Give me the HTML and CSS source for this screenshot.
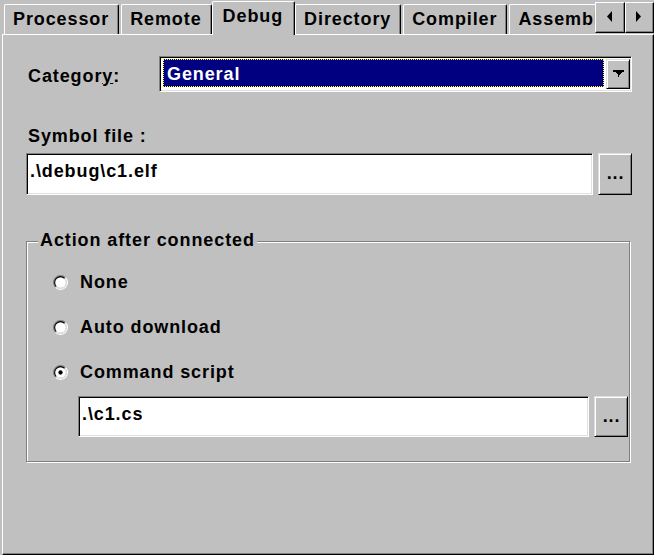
FILE: index.html
```html
<!DOCTYPE html>
<html>
<head>
<meta charset="utf-8">
<title>Debug settings</title>
<link rel="stylesheet" href="styles.css">
</head>
<body>
<div class="dialog">
  <div class="tabstrip">
    <div class="tabs">
      <div class="tab">Processor</div>
      <div class="tab">Remote</div>
      <div class="tab active">Debug</div>
      <div class="tab">Directory</div>
      <div class="tab">Compiler</div>
      <div class="tab">Assembler</div>
    </div>
    <div class="scroller">
      <div class="scroll-btn">
        <svg width="6" height="11" viewBox="0 0 6 11"><polygon points="5,0 5,11 0,5.5" fill="#000"/></svg>
      </div>
      <div class="scroll-btn">
        <svg width="6" height="11" viewBox="0 0 6 11"><polygon points="0,0 0,11 5,5.5" fill="#000"/></svg>
      </div>
    </div>
  </div>

  <div class="panel">
    <div class="category-row">
      <span class="label category-label">Categor<u>y</u>:</span>
      <div class="combo">
        <div class="combo-value">General</div>
        <div class="combo-btn">
          <svg width="11" height="7" viewBox="0 0 11 7" shape-rendering="crispEdges">
            <rect x="0" y="0" width="11" height="2" fill="#000"/>
            <polygon points="2,2 9,2 5.5,5.5" fill="#000"/>
            <rect x="5" y="5" width="1" height="2" fill="#000"/>
          </svg>
        </div>
      </div>
    </div>

    <div class="label symbol-label">Symbol file :</div>
    <div class="file-row">
      <div class="field symbol-field">.\debug\c1.elf</div>
      <div class="btn">...</div>
    </div>

    <fieldset class="group">
      <legend>Action after connected</legend>
      <div class="radios">
        <div class="radio">
          <svg width="15" height="15" viewBox="0 0 14 14">
            <circle cx="7" cy="7" r="5" fill="#fff"/>
            <path d="M2.4 11.6 A6.5 6.5 0 0 1 11.6 2.4" stroke="#808080" fill="none"/>
            <path d="M11.6 2.4 A6.5 6.5 0 0 1 2.4 11.6" stroke="#fff" fill="none"/>
            <path d="M3.11 10.89 A5.5 5.5 0 0 1 10.89 3.11" stroke="#000" fill="none"/>
            <path d="M10.89 3.11 A5.5 5.5 0 0 1 3.11 10.89" stroke="#dfdfdf" fill="none"/>
          </svg>
          <span>None</span>
        </div>
        <div class="radio">
          <svg width="15" height="15" viewBox="0 0 14 14">
            <circle cx="7" cy="7" r="5" fill="#fff"/>
            <path d="M2.4 11.6 A6.5 6.5 0 0 1 11.6 2.4" stroke="#808080" fill="none"/>
            <path d="M11.6 2.4 A6.5 6.5 0 0 1 2.4 11.6" stroke="#fff" fill="none"/>
            <path d="M3.11 10.89 A5.5 5.5 0 0 1 10.89 3.11" stroke="#000" fill="none"/>
            <path d="M10.89 3.11 A5.5 5.5 0 0 1 3.11 10.89" stroke="#dfdfdf" fill="none"/>
          </svg>
          <span>Auto download</span>
        </div>
        <div class="radio">
          <svg width="15" height="15" viewBox="0 0 14 14">
            <circle cx="7" cy="7" r="5" fill="#fff"/>
            <path d="M2.4 11.6 A6.5 6.5 0 0 1 11.6 2.4" stroke="#808080" fill="none"/>
            <path d="M11.6 2.4 A6.5 6.5 0 0 1 2.4 11.6" stroke="#fff" fill="none"/>
            <path d="M3.11 10.89 A5.5 5.5 0 0 1 10.89 3.11" stroke="#000" fill="none"/>
            <path d="M10.89 3.11 A5.5 5.5 0 0 1 3.11 10.89" stroke="#dfdfdf" fill="none"/>
            <circle cx="7" cy="7" r="2" fill="#000"/>
          </svg>
          <span>Command script</span>
        </div>
      </div>
      <div class="file-row script-row">
        <div class="field script-field">.\c1.cs</div>
        <div class="btn">...</div>
      </div>
    </fieldset>
  </div>
</div>
</body>
</html>
```

FILE: styles.css
```css
* {
  box-sizing: border-box;
}

html, body {
  margin: 0;
  padding: 0;
}

body {
  width: 654px;
  height: 555px;
  overflow: hidden;
  background: #c0c0c0;
  color: #000;
  font-family: "Liberation Sans", Arial, sans-serif;
  font-weight: bold;
  font-size: 18px;
  line-height: 20px;
  letter-spacing: 0.9px;
}

.dialog {
  display: flex;
  flex-direction: column;
  height: 555px;
  padding-left: 2px;
}

/* ---------- tabs ---------- */
.tabstrip {
  display: flex;
  height: 35px;
  position: relative;
  z-index: 1;
}

.tabs {
  flex: 1;
  min-width: 0;
  display: flex;
  align-items: flex-end;
  gap: 2px;
  padding-left: 2px;
  overflow: hidden;
}

.tab {
  flex: none;
  height: 30px;
  margin-bottom: 1px;
  padding: 0 9px 0 8px;
  line-height: 29px;
  white-space: nowrap;
  background: #c0c0c0;
  border-top: 1px solid #fff;
  border-left: 1px solid #fff;
  border-right: 1px solid #000;
  border-radius: 2px 2px 0 0;
  box-shadow: inset -1px 0 0 #808080;
}

.tab.active {
  height: 34px;
  margin: 0 -2px;
  padding: 0 11px 5px 10px;
  line-height: 28px;
}

.scroller {
  display: flex;
  flex: none;
  width: 59px;
  margin-top: 2px;
  height: 31px;
}

.scroll-btn {
  flex: 1;
  display: flex;
  align-items: center;
  justify-content: center;
  border-top: 1px solid #fff;
  border-left: 1px solid #fff;
  border-right: 1px solid #000;
  border-bottom: 1px solid #000;
  box-shadow: inset -1px -1px 0 #808080;
  padding-bottom: 2px;
}

/* ---------- page panel ---------- */
.panel {
  flex: 1;
  margin-top: -1px;
  padding-left: 23px;
  border-top: 1px solid #fff;
  border-left: 1px solid #fff;
  border-right: 1px solid #000;
  border-bottom: 1px solid #000;
  box-shadow: inset -1px -1px 0 #808080;
}

.label {
  margin-left: 2px;
  white-space: nowrap;
}

.category-row {
  display: flex;
  align-items: center;
  justify-content: space-between;
  width: 606px;
  height: 36px;
  margin-top: 21px;
}

.category-label {
  padding-top: 3px;
}

/* sunken field look */
.combo,
.field {
  background: #fff;
  border: 1px solid;
  border-color: #808080 #fff #fff #808080;
  box-shadow: inset 1px 1px 0 #000, inset -1px -1px 0 #dfdfdf;
}

.combo {
  width: 473px;
  height: 36px;
  display: flex;
  align-items: flex-start;
  padding: 2px 1px 1px 3px;
}

.combo-value {
  flex: 1;
  height: 28px;
  margin-right: 2px;
  padding: 2px 0 0 3px;
  line-height: 25px;
  color: #fff;
  background: #000080;
  border: 1px dotted #ffff00;
}

.combo-btn,
.btn {
  background: #c0c0c0;
  border: 1px solid;
  border-color: #dfdfdf #000 #000 #dfdfdf;
  box-shadow: inset 1px 1px 0 #fff, inset -1px -1px 0 #808080;
}

.combo-btn {
  width: 24px;
  height: 30px;
  display: flex;
  align-items: center;
  justify-content: center;
  padding-bottom: 1px;
}

.symbol-label {
  margin-top: 34px;
}

.file-row {
  display: flex;
  gap: 5px;
  width: 606px;
  height: 42px;
  margin-top: 7px;
}

.field {
  flex: 1;
  padding: 7px 0 0 3px;
  white-space: nowrap;
}

.btn {
  flex: none;
  width: 34px;
  display: flex;
  align-items: center;
  justify-content: center;
  padding: 0 0 2px 1px;
}

/* ---------- group ---------- */
.group {
  width: 604px;
  margin: 36px 0 0;
  padding: 0 0 24px 11px;
  min-width: 0;
  border: 1px solid #808080;
  box-shadow: 1px 1px 0 #fff, inset 1px 1px 0 #fff;
}

.group legend {
  padding: 0 2px 3px;
  line-height: 18px;
  background: #c0c0c0;
}

.radios {
  display: flex;
  flex-direction: column;
  gap: 25px;
  margin: 20px 0 0 15px;
}

.radio {
  display: flex;
  align-items: center;
  gap: 12px;
  height: 20px;
}

.radio svg {
  flex: none;
}

.script-row {
  width: 550px;
  height: 41px;
  margin: 14px 0 0 40px;
}
```
